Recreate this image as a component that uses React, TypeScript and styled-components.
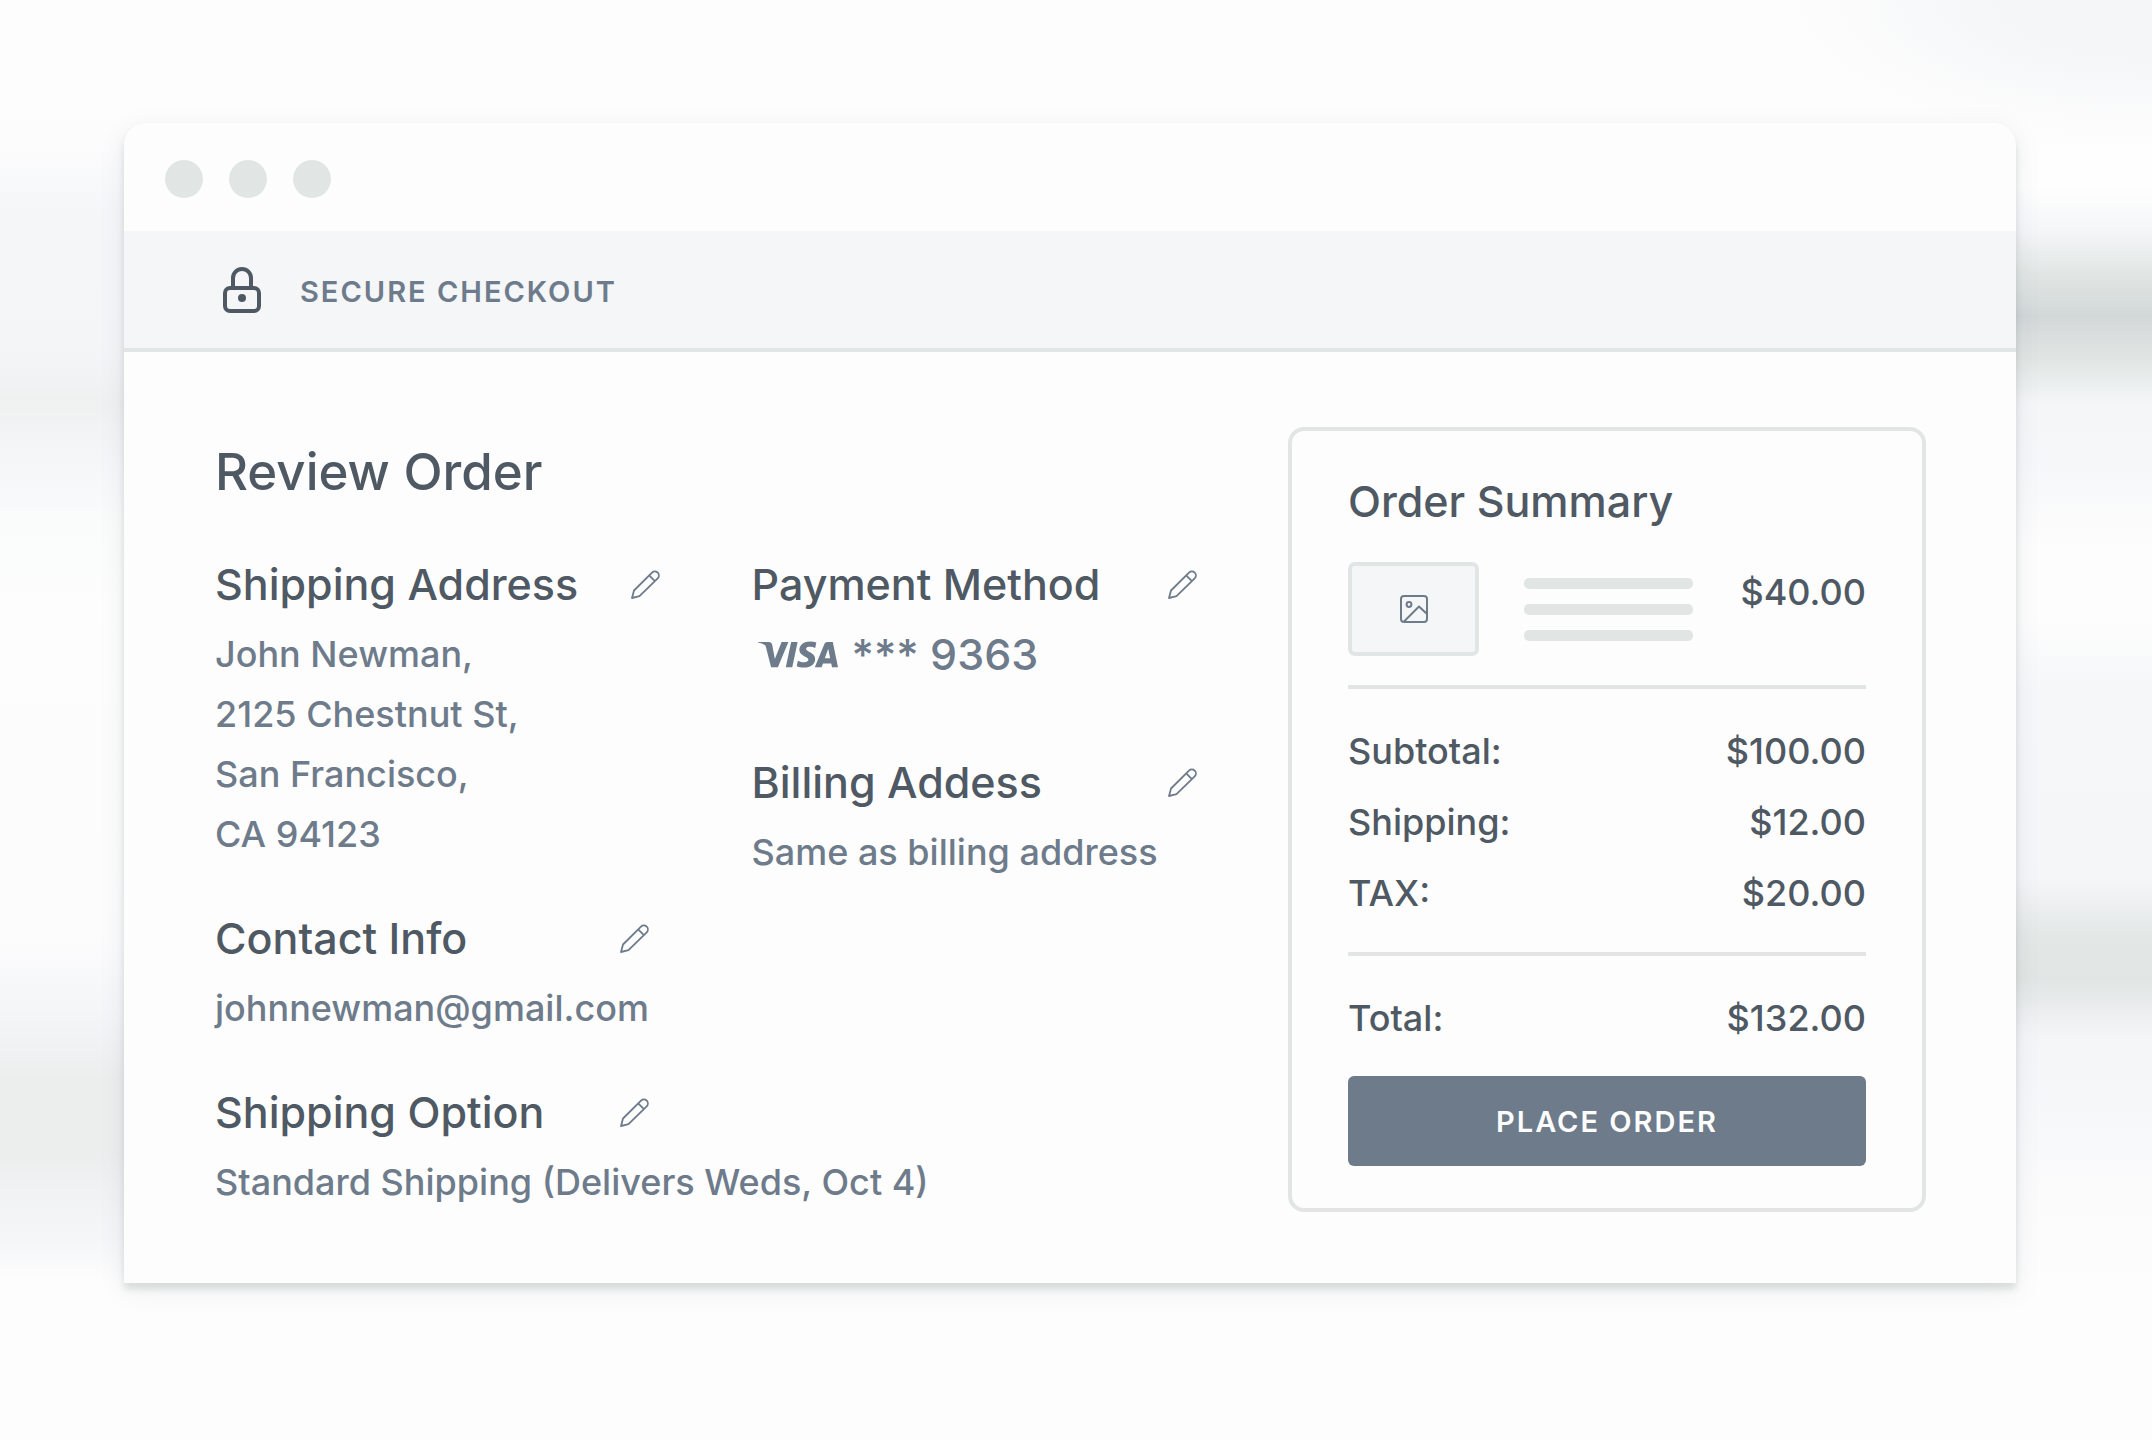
import React from "react";
import styled, { createGlobalStyle } from "styled-components";
import { SiVisa } from "react-icons/si";

const ink = "#4f5963";
const slate = "#6e7b8b";
const line = "#e1e6e4";
const mist = "#f5f6f8";
const paper = "#fdfdfd";

const GlobalStyle = createGlobalStyle`
  *, *::before, *::after { box-sizing: border-box; }
  body { margin: 0; background: ${paper}; }
  h1, h2, p, dl, dd, address { margin: 0; }
`;

const Page = styled.div`
  min-height: 100vh;
  padding: 123px 136px 123px 124px;
  font-family: Inter, "Liberation Sans", sans-serif;
  font-size: 36px;
  font-weight: 500;
  line-height: 60px;
  color: ${ink};
  background:
    radial-gradient(ellipse 360px 140px at 100% 0, #f5f6f8 40%, transparent) no-repeat,
    linear-gradient(
      to bottom,
      transparent 9%, #fefefe 13%, #f5f6f8 16%, #e1e6e4 19%, #d2d7d8 22%, #d8dcdc 23%,
      #e1e6e4 25%, #f4f6f7 28%, #f6f7f9 32%, #fdfdfd 38%, #fdfdfd 43%, #f6f7f9 48%,
      #f5f6f8 61%, #e3e7e6 65%, #e1e5e4 68%, #f4f5f7 72%, #f6f7f9 76%, #fbfbfc 83%, transparent 89%
    ) right top / 14% 100% no-repeat,
    linear-gradient(
      to bottom,
      transparent 8%, #fcfcfd 10%, #f5f6f8 15%, #f4f5f7 24%, #eff1f1 28%, #f5f6f8 32%,
      #fafbfb 36%, #fdfdfd 42%, #fcfcfd 65%, #f5f6f8 70%, #eceeee 75%, #eceeee 80%,
      #f5f6f8 86%, transparent 89%
    ) left top / 8% 100% no-repeat,
    ${paper};
`;

const Window = styled.div`
  border-radius: 22px 22px 0 0;
  background: ${paper};
  box-shadow: 0 6px 6px rgba(90, 110, 100, 0.16), 0 6px 24px rgba(110, 123, 130, 0.14);
`;

const TitleBar = styled.div`
  display: flex;
  align-items: center;
  gap: 26px;
  height: 108px;
  padding: 4px 41px 0;
`;

const Dot = styled.span`
  width: 38px;
  height: 38px;
  border-radius: 50%;
  background: ${line};
`;

const Banner = styled.header`
  display: flex;
  align-items: center;
  gap: 38px;
  height: 121px;
  padding: 0 98px;
  border-bottom: 4px solid ${line};
  background: ${mist};
`;

const BannerText = styled.p`
  padding-top: 4px;
  color: ${slate};
  font-size: 29px;
  font-weight: 600;
  line-height: 40px;
  letter-spacing: 2px;
`;

const Content = styled.div`
  display: flex;
  align-items: flex-start;
  padding: 75px 90px 71px 91px;
`;

const Review = styled.main`
  flex: 1;
  padding-top: 13px;
`;

const PageTitle = styled.h1`
  margin-bottom: 52px;
  font-size: 51px;
  font-weight: 500;
  line-height: 64px;
`;

const Columns = styled.div`
  display: grid;
  grid-template-columns: 1fr 1fr;
`;

const Column = styled.div<{ $gap: number }>`
  display: flex;
  flex-direction: column;
  gap: ${(p) => p.$gap}px;
  min-width: 0;
  white-space: nowrap;
`;

const SectionHead = styled.div<{ $width: number }>`
  display: flex;
  align-items: center;
  justify-content: space-between;
  width: ${(p) => p.$width}px;
  margin-bottom: 12px;
`;

const Heading = styled.h2`
  font-size: 43px;
  font-weight: 500;
  line-height: 56px;
`;

const EditButton = styled.button`
  display: flex;
  padding: 0;
  border: 0;
  background: none;
  color: ${slate};
  cursor: pointer;
`;

const Detail = styled.p`
  color: ${slate};
`;

const Address = styled.address`
  color: ${slate};
  font-style: normal;
`;

const Card = styled.p`
  display: flex;
  align-items: center;
  gap: 14px;
  padding-left: 6px;
  color: ${slate};
  font-size: 43px;
`;

const VisaLogo = styled(SiVisa)`
  width: 80px;
  height: 27px;
`;

const Summary = styled.aside`
  flex: 0 0 638px;
  padding: 42px 56px;
  border: 4px solid ${line};
  border-radius: 16px;
`;

const Item = styled.div`
  display: flex;
  align-items: center;
  margin-top: 33px;
`;

const Thumb = styled.div`
  display: flex;
  align-items: center;
  justify-content: center;
  width: 131px;
  height: 94px;
  margin-right: 45px;
  border: 4px solid ${line};
  border-radius: 7px;
  background: ${mist};
  color: ${slate};
`;

const Bars = styled.div`
  display: grid;
  gap: 15px;
  width: 169px;
`;

const Bar = styled.span`
  height: 11px;
  border-radius: 5px;
  background: ${line};
`;

const Price = styled.span`
  align-self: flex-start;
  margin-left: auto;
`;

const Rule = styled.hr`
  height: 4px;
  margin: 29px 0 32px;
  border: 0;
  background: ${line};
`;

const Totals = styled.dl`
  display: grid;
  gap: 11px;
`;

const TotalRow = styled.div`
  display: flex;
  justify-content: space-between;
`;

const PlaceOrder = styled.button`
  width: 100%;
  height: 90px;
  margin-top: 28px;
  border: 0;
  border-radius: 6px;
  background: ${slate};
  color: ${paper};
  font-family: inherit;
  font-size: 29px;
  font-weight: 600;
  letter-spacing: 2px;
  cursor: pointer;
`;

const LockIcon = () => (
  <svg width="40" height="46" viewBox="0 0 40 46" fill="none" stroke={ink} strokeWidth="4" aria-hidden="true">
    <rect x="3" y="21" width="34" height="23" rx="5" />
    <path d="M11 21V11a9 9 0 0 1 18 0v10" />
    <circle cx="20" cy="31" r="4" fill={ink} stroke="none" />
  </svg>
);

const PencilIcon = () => (
  <svg width="29" height="29" viewBox="0 0 29 29" fill="none" stroke="currentColor" strokeWidth="1.8" strokeLinejoin="round" aria-hidden="true">
    <path d="M1 28 3 20.5 21 2.6a4 4 0 0 1 5.7 5.7L8.5 26.2ZM18.2 5.4l5.7 5.7" />
  </svg>
);

const PictureIcon = () => (
  <svg width="28" height="28" viewBox="0 0 28 28" fill="none" stroke="currentColor" strokeWidth="2" strokeLinejoin="round" aria-hidden="true">
    <rect x="1" y="1" width="26" height="26" rx="3" />
    <circle cx="9" cy="9.5" r="2.4" />
    <path d="M4 26.5 19 11.5l8 7.5" />
  </svg>
);

type SectionProps = { title: string; width: number; children: React.ReactNode };

const Section = ({ title, width, children }: SectionProps) => (
  <section>
    <SectionHead $width={width}>
      <Heading>{title}</Heading>
      <EditButton type="button" aria-label={`Edit ${title}`}>
        <PencilIcon />
      </EditButton>
    </SectionHead>
    {children}
  </section>
);

const Total = ({ label, amount }: { label: string; amount: string }) => (
  <TotalRow>
    <dt>{label}</dt>
    <dd>{amount}</dd>
  </TotalRow>
);

export default function App() {
  return (
    <>
      <GlobalStyle />
      <Page>
        <Window>
          <TitleBar>
            <Dot />
            <Dot />
            <Dot />
          </TitleBar>
          <Banner>
            <LockIcon />
            <BannerText>SECURE CHECKOUT</BannerText>
          </Banner>
          <Content>
            <Review>
              <PageTitle>Review Order</PageTitle>
              <Columns>
                <Column $gap={46}>
                  <Section title="Shipping Address" width={445}>
                    <Address>
                      John Newman,
                      <br />
                      2125 Chestnut St,
                      <br />
                      San Francisco,
                      <br />
                      CA 94123
                    </Address>
                  </Section>
                  <Section title="Contact Info" width={434}>
                    <Detail>johnnewman@gmail.com</Detail>
                  </Section>
                  <Section title="Shipping Option" width={434}>
                    <Detail>Standard Shipping (Delivers Weds, Oct 4)</Detail>
                  </Section>
                </Column>
                <Column $gap={70}>
                  <Section title="Payment Method" width={445}>
                    <Card>
                      <VisaLogo viewBox="0 8 24 8" preserveAspectRatio="none" aria-label="Visa" />
                      <span>*** 9363</span>
                    </Card>
                  </Section>
                  <Section title="Billing Addess" width={445}>
                    <Detail>Same as billing address</Detail>
                  </Section>
                </Column>
              </Columns>
            </Review>
            <Summary>
              <Heading>Order Summary</Heading>
              <Item>
                <Thumb>
                  <PictureIcon />
                </Thumb>
                <Bars>
                  <Bar />
                  <Bar />
                  <Bar />
                </Bars>
                <Price>$40.00</Price>
              </Item>
              <Rule />
              <Totals>
                <Total label="Subtotal:" amount="$100.00" />
                <Total label="Shipping:" amount="$12.00" />
                <Total label="TAX:" amount="$20.00" />
              </Totals>
              <Rule />
              <Totals>
                <Total label="Total:" amount="$132.00" />
              </Totals>
              <PlaceOrder type="button">PLACE ORDER</PlaceOrder>
            </Summary>
          </Content>
        </Window>
      </Page>
    </>
  );
}
